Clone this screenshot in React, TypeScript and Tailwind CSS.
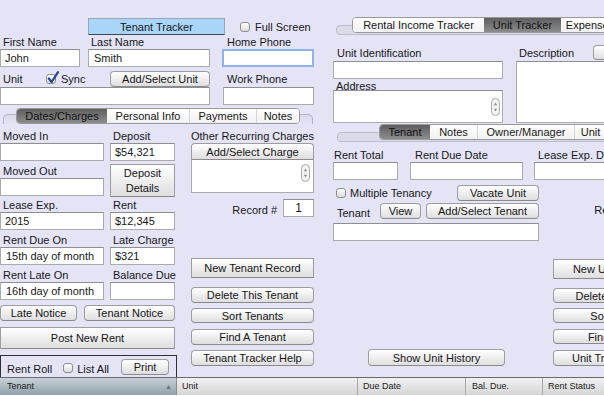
import React from "react";

type P = { className?: string; children?: React.ReactNode };

function Label({ className = "", children }: P) {
  return <div className={`pl-[3px] whitespace-nowrap ${className}`}>{children}</div>;
}

function Field({ className = "", children }: P) {
  return (
    <div
      className={`h-[18px] shrink-0 bg-white border border-[#ababab] border-t-[#8e8e8e] pl-[4px] leading-[16px] whitespace-nowrap overflow-hidden ${className}`}
    >
      {children}
    </div>
  );
}

function Btn({
  className = "",
  children,
  square = false,
  top = false,
}: P & { square?: boolean; top?: boolean }) {
  const r = square ? "rounded-[1px]" : top ? "rounded-t-[4px]" : "rounded-[4px]";
  return (
    <div
      className={`shrink-0 flex items-center justify-center whitespace-nowrap border border-[#9d9d9d] border-b-[#8a8a8a] bg-linear-to-b from-[#ffffff] to-[#dedede] text-[#151515] ${r} ${className}`}
    >
      {children}
    </div>
  );
}

function Check({ checked = false }: { checked?: boolean }) {
  return (
    <span className="relative inline-block w-[10px] h-[10px] shrink-0 rounded-[3px] border border-[#8d8d8d] bg-linear-to-b from-[#ffffff] to-[#dcdcdc]">
      {checked && (
        <svg className="absolute left-[0px] top-[-4px]" width="13" height="13" viewBox="0 0 13 13">
          <path
            d="M1.8 7.5 L4.6 11 L11 1.2"
            fill="none"
            stroke="#26468f"
            strokeWidth="2.2"
            strokeLinecap="round"
            strokeLinejoin="round"
          />
        </svg>
      )}
    </span>
  );
}

function Spinner() {
  return (
    <svg width="9" height="18" viewBox="0 0 9 18">
      <rect x="0.5" y="0.5" width="8" height="17" rx="4" fill="#f3f3f3" stroke="#a9a9a9" />
      <path d="M2.9 7.2 L4.5 4.6 L6.1 7.2Z" fill="#8a8a8a" />
      <path d="M2.9 10.8 L4.5 13.4 L6.1 10.8Z" fill="#8a8a8a" />
    </svg>
  );
}

type Tab = { label: string; w: string; sel?: boolean };

function TabStrip({ tabs }: { tabs: Tab[] }) {
  return (
    <div className="flex h-[16px] rounded-[4px] border border-[#999999] bg-white overflow-hidden">
      {tabs.map((t, i) => (
        <div
          key={i}
          className={`${t.w} shrink-0 flex items-center justify-center whitespace-nowrap leading-[14px] ${
            i > 0 && !t.sel && !tabs[i - 1].sel ? "border-l border-[#d6d6d6]" : ""
          } ${
            t.sel
              ? "bg-linear-to-b from-[#5f5f5f] to-[#8d8d8d] text-[#111111]"
              : "bg-linear-to-b from-[#ffffff] to-[#f1f1f1]"
          }`}
        >
          {t.label}
        </div>
      ))}
    </div>
  );
}

function RecordRow({ className = "" }: { className?: string }) {
  return (
    <div className={`h-[18px] flex items-center justify-end ${className}`}>
      <span className="mt-[3px]">Record #</span>
      <div className="ml-[6px] w-[31px] h-[18px] bg-white border border-[#a9a9a9] border-t-[#8e8e8e] flex items-center justify-center text-[12px]">
        1
      </div>
    </div>
  );
}

function LeftPanel() {
  return (
    <div className="w-[320px] shrink-0 flex flex-col pt-[18px]">
      <div className="flex h-[17px] items-center">
        <div className="ml-[88px] w-[137px] h-[17px] bg-[#a8d5f8] border border-[#9aa6b6] border-b-[#3e4652] flex items-center justify-center">
          Tenant Tracker
        </div>
        <div className="ml-[15px] flex items-center gap-[5px]">
          <Check />
          <span>Full Screen</span>
        </div>
      </div>
      <div className="flex h-[14px]">
        <Label className="w-[88px]">First Name</Label>
        <Label className="w-[136px]">Last Name</Label>
        <Label>Home Phone</Label>
      </div>
      <div className="flex">
        <Field className="w-[80px]">John</Field>
        <Field className="ml-[8px] w-[122px] pl-[5px]">Smith</Field>
        <div className="ml-[12px] w-[92px] h-[18px] bg-white border-2 border-[#8fb3e8]" />
      </div>
      <div className="mt-[4px] flex h-[16px] items-center">
        <Label className="w-[46px]">Unit</Label>
        <div className="w-[64px] flex items-center gap-[5px]">
          <Check checked />
          <span>Sync</span>
        </div>
        <Btn className="w-[100px] h-[16px]">Add/Select Unit</Btn>
        <Label className="ml-[14px]">Work Phone</Label>
      </div>
      <div className="flex">
        <Field className="w-[210px]" />
        <Field className="ml-[13px] w-[91px]" />
      </div>
      <div className="relative mt-[3px] h-[17px]">
        <div className="absolute left-[3px] top-[6px] w-[310px] h-[10px] rounded-t-[5px] border border-b-0 border-[#b3b3c6] bg-linear-to-b from-[#d9d9ea] to-[#e4e4f6]" />
        <div className="absolute left-[16px] top-0">
          <TabStrip
            tabs={[
              { label: "Dates/Charges", w: "w-[90px]", sel: true },
              { label: "Personal Info", w: "w-[82px]" },
              { label: "Payments", w: "w-[67px]" },
              { label: "Notes", w: "w-[43px]" },
            ]}
          />
        </div>
      </div>
      <div className="flex">
        <div className="w-[177px] flex flex-col">
          <div className="flex">
            <div className="w-[104px] flex flex-col">
              <Label className="mt-[4px] h-[14px]">Moved In</Label>
              <Field />
              <Label className="mt-[3px] h-[14px]">Moved Out</Label>
              <Field />
              <Label className="mt-[2px] h-[14px]">Lease Exp.</Label>
              <Field>2015</Field>
              <Label className="mt-[3px] h-[14px]">Rent Due On</Label>
              <Field className="pl-[5px]">15th day of month</Field>
              <Label className="mt-[3px] h-[14px]">Rent Late On</Label>
              <Field className="pl-[5px]">16th day of month</Field>
            </div>
            <div className="ml-[6px] w-[65px] flex flex-col">
              <Label className="mt-[4px] h-[14px]">Deposit</Label>
              <Field>$54,321</Field>
              <Btn square className="mt-[3px] h-[33px] flex-col leading-[15px]">
                <span>Deposit</span>
                <span>Details</span>
              </Btn>
              <Label className="mt-[1px] h-[14px]">Rent</Label>
              <Field>$12,345</Field>
              <Label className="mt-[3px] h-[14px]">Late Charge</Label>
              <Field>$321</Field>
              <Label className="mt-[3px] h-[14px]">Balance Due</Label>
              <Field />
            </div>
          </div>
          <div className="mt-[5px] flex">
            <Btn className="w-[77px] h-[16px]">Late Notice</Btn>
            <Btn className="ml-[7px] w-[91px] h-[16px]">Tenant Notice</Btn>
          </div>
          <Btn square className="mt-[6px] w-[175px] h-[22px]">
            Post New Rent
          </Btn>
          <div className="mt-[6px] h-[22px] w-[177px] border border-b-0 border-[#303030] flex items-center">
            <span className="ml-[6px] mt-[4px]">Rent Roll</span>
            <span className="ml-[11px] mt-[3px] flex">
              <Check />
            </span>
            <span className="ml-[4px] mt-[4px]">List All</span>
            <Btn className="ml-[12px] w-[48px] h-[16px]">Print</Btn>
          </div>
        </div>
        <div className="ml-[14px] w-[123px] flex flex-col">
          <div className="mt-[4px] h-[14px] whitespace-nowrap">Other Recurring Charges</div>
          <Btn top className="h-[17px]">
            Add/Select Charge
          </Btn>
          <div className="h-[33px] bg-white border border-t-0 border-[#ababab] flex justify-end items-start pr-[3px] pt-[4px]">
            <Spinner />
          </div>
          <RecordRow className="mt-[6px]" />
          <Btn square className="mt-[41px] h-[20px]">
            New Tenant Record
          </Btn>
          <Btn className="mt-[9px] h-[16px]">Delete This Tenant</Btn>
          <Btn className="mt-[5px] h-[15px]">Sort Tenants</Btn>
          <Btn className="mt-[6px] h-[16px]">Find A Tenant</Btn>
          <Btn className="mt-[5px] h-[16px]">Tenant Tracker Help</Btn>
        </div>
      </div>
    </div>
  );
}

function RightPanel() {
  return (
    <div className="w-[400px] shrink-0 flex flex-col pt-[17px]">
      <div className="relative h-[17px]">
        <div className="absolute left-[16px] top-[8px] w-[380px] h-[10px] rounded-[4px] border border-[#bcbccc] bg-[#dadae9]" />
        <div className="absolute left-[32px] top-0">
          <TabStrip
            tabs={[
              { label: "Rental Income Tracker", w: "w-[131px]" },
              { label: "Unit Tracker", w: "w-[77px]", sel: true },
              { label: "Expenses", w: "w-[58px]" },
            ]}
          />
        </div>
      </div>
      <div className="mt-[11px] flex h-[79px]">
        <div className="ml-[13px] w-[170px] flex flex-col">
          <Label className="h-[15px] pl-[4px] pt-[1px]">Unit Identification</Label>
          <Field className="mt-[1px]" />
          <Label className="h-[11px] overflow-visible">Address</Label>
          <div className="h-[33px] bg-white border border-[#ababab] border-t-[#8e8e8e] flex justify-end items-center pr-[2px]">
            <Spinner />
          </div>
        </div>
        <div className="ml-[13px] flex flex-col">
          <div className="flex h-[15px]">
            <Label className="w-[77px] pt-[1px]">Description</Label>
            <Btn className="w-[80px] h-[15px]" />
          </div>
          <div className="mt-[1px] w-[120px] h-[62px] bg-white border border-[#ababab] border-t-[#8e8e8e]" />
        </div>
      </div>
      <div className="relative h-[16px]">
        <div className="absolute left-[17px] top-[8px] w-[380px] h-[10px] rounded-[4px] border border-[#bcbccc] bg-[#dadae9]" />
        <div className="absolute left-[59px] top-0">
          <TabStrip
            tabs={[
              { label: "Tenant", w: "w-[50px]", sel: true },
              { label: "Notes", w: "w-[47px]" },
              { label: "Owner/Manager", w: "w-[97px]" },
              { label: "Unit", w: "w-[32px]" },
            ]}
          />
        </div>
      </div>
      <div className="mt-[8px] flex h-[14px]">
        <div className="ml-[14px] w-[81px] whitespace-nowrap">Rent Total</div>
        <div className="w-[123px] whitespace-nowrap">Rent Due Date</div>
        <div className="whitespace-nowrap">Lease Exp. Date</div>
      </div>
      <div className="flex">
        <Field className="ml-[13px] w-[65px]" />
        <Field className="ml-[12px] w-[113px]" />
        <Field className="ml-[11px] w-[100px]" />
      </div>
      <div className="flex h-[186px]">
        <div className="w-[233px] flex flex-col">
          <div className="mt-[5px] h-[16px] flex items-center pl-[16px]">
            <div className="w-[121px] flex items-center gap-[4px]">
              <Check />
              <span>Multiple Tenancy</span>
            </div>
            <Btn className="w-[82px] h-[16px]">Vacate Unit</Btn>
          </div>
          <div className="mt-[2px] h-[16px] flex items-center pl-[17px]">
            <span className="w-[43px] mt-[4px]">Tenant</span>
            <Btn className="w-[41px] h-[16px]">View</Btn>
            <Btn className="ml-[5px] w-[113px] h-[16px]">Add/Select Tenant</Btn>
          </div>
          <Field className="mt-[4px] ml-[13px] w-[206px]" />
          <Btn className="mt-[108px] ml-[48px] w-[137px] h-[17px]">Show Unit History</Btn>
        </div>
        <div className="w-[123px] flex flex-col">
          <RecordRow className="mt-[19px]" />
          <Btn square className="mt-[42px] h-[20px]">
            New Unit Record
          </Btn>
          <Btn className="mt-[9px] h-[15px]">Delete This Unit</Btn>
          <Btn className="mt-[5px] h-[15px]">Sort Units</Btn>
          <Btn className="mt-[6px] h-[15px]">Find A Unit</Btn>
          <Btn className="mt-[6px] h-[16px]">Unit Tracker Help</Btn>
        </div>
      </div>
    </div>
  );
}

function TableHeader() {
  const cell =
    "h-full shrink-0 bg-linear-to-b from-[#f1f1f1] to-[#d5d5d5] border-r border-[#a8a8a8] whitespace-nowrap";
  return (
    <div className="h-[18px] shrink-0 flex border-t border-[#6a6a6a] text-[9px] leading-[17px] text-[#222222]">
      <div className="w-[177px] h-full shrink-0 flex justify-between pl-[7px] pr-[4px] bg-linear-to-b from-[#cad2d8] to-[#91a0a9] border-r border-[#8b8b8b]">
        <span>Tenant</span>
        <span className="text-[7px] text-[#66747c]">▲</span>
      </div>
      <div className={`${cell} w-[181px] pl-[5px]`}>Unit</div>
      <div className={`${cell} w-[108px] pl-[5px]`}>Due Date</div>
      <div className={`${cell} w-[77px] pl-[6px]`}>Bal. Due.</div>
      <div className={`${cell} w-[80px] pl-[5px]`}>Rent Status</div>
    </div>
  );
}

export default function App() {
  return (
    <div className="w-[604px] h-[396px] overflow-hidden bg-[#e4e4f6] font-['Liberation_Sans',Arial,sans-serif] text-[11px] leading-[14px] text-[#171717] flex flex-col">
      <div className="flex h-[377px] shrink-0">
        <LeftPanel />
        <RightPanel />
      </div>
      <TableHeader />
      <div className="flex-1 bg-white" />
    </div>
  );
}
